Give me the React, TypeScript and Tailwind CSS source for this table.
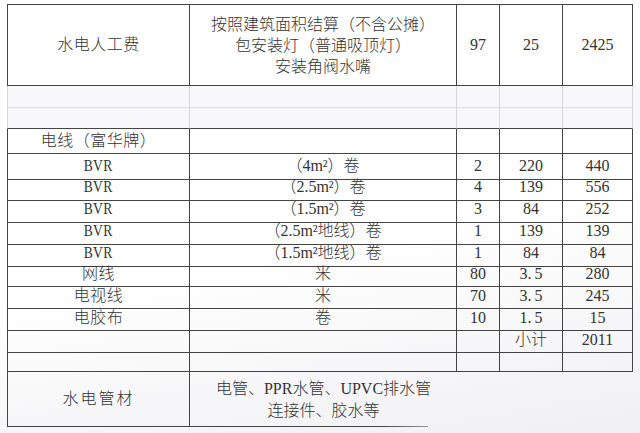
import React from 'react';

const cols = 'grid grid-cols-[183px_267px_43px_63px_70px]';
const dark = 'border-[#444]';

const items: [string, string, string, React.ReactNode, string][] = [
  ['BVR', '（4m²）卷', '2', '220', '440'],
  ['BVR', '（2.5m²）卷', '4', '139', '556'],
  ['BVR', '（1.5m²）卷', '3', '84', '252'],
  ['BVR', '（2.5m²地线）卷', '1', '139', '139'],
  ['BVR', '（1.5m²地线）卷', '1', '84', '84'],
  ['网线', '米', '80', '3.5', '280'],
  ['电视线', '米', '70', '3.5', '245'],
  ['电胶布', '卷', '10', '1.5', '15'],
];

const Cell = ({ children, className = '' }: { children?: React.ReactNode; className?: string }) => (
  <div className={`flex items-center justify-center border-r border-b ${dark} ${className}`}>{children}</div>
);

const Faint = ({ className = '' }: { className?: string }) => (
  <div className={`border-r border-b border-r-[#d6d6dc] ${className}`} />
);

const Latin = ({ children }: { children: React.ReactNode }) => (
  <span className="inline-block origin-center scale-x-[0.8] text-[17px]">{children}</span>
);

// spread the dot the way the full-width font does
const Num = ({ v }: { v: React.ReactNode }) => {
  if (typeof v === 'string' && v.includes('.')) {
    const [a, b] = v.split('.');
    return (
      <span>
        {a}.<span className="ml-[3px]">{b}</span>
      </span>
    );
  }
  return <span>{v}</span>;
};

export default function App() {
  return (
    <div className="min-h-[433px] w-[640px] overflow-hidden bg-[linear-gradient(170deg,#ffffff_55%,#f0f0f3_100%)] pt-[4px] pl-[7px] font-['Liberation_Serif','Noto_Sans_CJK_SC',serif] text-[16px] font-light text-[#333]">
      {/* header row */}
      <div className={`${cols} h-[82px]`}>
        <Cell className="border-t border-l tracking-[0.5px]">水电人工费</Cell>
        <Cell className="border-t flex-col leading-[21px]">
          <span>按照建筑面积结算（不含公摊）</span>
          <span>包安装灯（普通吸顶灯）</span>
          <span>安装角阀水嘴</span>
        </Cell>
        <Cell className="border-t">97</Cell>
        <Cell className="border-t">25</Cell>
        <Cell className="border-t">2425</Cell>
      </div>

      {/* faint spacer rows */}
      <div className={`${cols} h-[22px] bg-[#f8f8fb]`}>
        <Faint className="border-l border-l-[#d6d6dc] border-b-[#dedee3]" />
        <Faint className="border-b-[#dedee3]" />
        <Faint className="border-b-[#dedee3]" />
        <Faint className="border-b-[#dedee3]" />
        <Faint className="border-b-[#dedee3]" />
      </div>
      <div className={`${cols} h-[21px] bg-[#f8f8fb]`}>
        <Faint className="border-l border-l-[#d6d6dc] border-b-[#444]" />
        <Faint className="border-b-[#444]" />
        <Faint className="border-b-[#444]" />
        <Faint className="border-b-[#444]" />
        <Faint className="border-b-[#444]" />
      </div>

      {/* brand row */}
      <div className={`${cols} h-[24px]`}>
        <Cell className="border-l tracking-[0.5px]">电线（富华牌）</Cell>
        <Cell />
        <Cell />
        <Cell />
        <Cell />
      </div>

      {items.map(([name, spec, qty, price, total], i) => (
        <div key={i} className={`${cols} ${i === 0 ? 'h-[21px]' : 'h-[22px]'}`}>
          <Cell className="border-l tracking-[0.5px]">{name === 'BVR' ? <Latin>BVR</Latin> : name}</Cell>
          <Cell>{spec}</Cell>
          <Cell>{qty}</Cell>
          <Cell>
            <Num v={price} />
          </Cell>
          <Cell>{total}</Cell>
        </div>
      ))}

      <div className={`${cols} h-[22px]`}>
        <Cell className="border-l" />
        <Cell />
        <Cell />
        <Cell>小计</Cell>
        <Cell>2011</Cell>
      </div>
      <div className={`${cols} h-[22px]`}>
        <Cell className="border-l" />
        <Cell />
        <Cell />
        <Cell />
        <Cell />
      </div>

      {/* last row, its right side fades out in the photo */}
      <div className="flex h-[55px]">
        <Cell className="w-[183px] border-l tracking-[2px]">水电管材</Cell>
        <div className="flex w-[267px] flex-col">
          <div className="flex flex-1 flex-col items-center justify-center pt-[2px] leading-[22px]">
            <span>电管、PPR水管、UPVC排水管</span>
            <span>连接件、胶水等</span>
          </div>
          <div className="h-px w-[238px] bg-gradient-to-r from-[#444] from-80% to-[#999]" />
        </div>
      </div>
    </div>
  );
}
